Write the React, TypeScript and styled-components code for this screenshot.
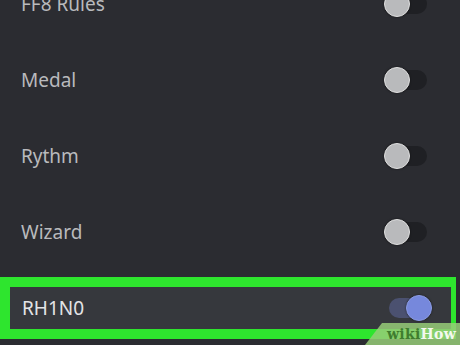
import styled, { createGlobalStyle } from 'styled-components'

const GlobalStyle = createGlobalStyle`
   html, body {
      margin: 0;
      padding: 0;
      background: #2b2c31;
      overflow: hidden;
   }
   body {
      width: 460px;
      height: 345px;
      font-family: 'Noto Sans', 'Open Sans', sans-serif;
   }
`

const Screen = styled.div`
   position: relative;
   width: 460px;
   height: 345px;
   overflow: hidden;
   background: #2b2c31;
`

const List = styled.div`
   display: flex;
   flex-direction: column;
   margin-top: -34px;
`

const Row = styled.div`
   display: flex;
   align-items: center;
   justify-content: space-between;
   height: 76px;
   padding: 0 33px 0 21px;
   color: #b9babd;
   font-size: 19px;
`

const Highlight = styled.div`
   margin: 7px 4px 0 0;
   border: 10px solid #2ee52e;
   border-right-width: 5px;
`

const ActiveRow = styled.div`
   display: flex;
   align-items: center;
   justify-content: space-between;
   height: 42px;
   padding: 0 20px 0 12px;
   background: #36383d;
   color: #e3e4e6;
   font-size: 19px;
`

const Track = styled.div<{ $on?: boolean }>`
   position: relative;
   width: 42px;
   height: 20px;
   border-radius: 10px;
   background: ${p => (p.$on ? '#4b5170' : '#1f2024')};
`

const Knob = styled.div<{ $on?: boolean }>`
   position: absolute;
   top: -3px;
   left: ${p => (p.$on ? '17px' : '-1px')};
   width: 26px;
   height: 26px;
   border-radius: 50%;
   box-sizing: border-box;
   background: ${p => (p.$on ? '#7688dc' : '#b9babc')};
   border: 1px solid ${p => (p.$on ? '#8c9ce4' : '#e0e0e0')};
   box-shadow: 0 0 2px rgba(0, 0, 0, 0.6);
`

const Watermark = styled.div`
   position: absolute;
   right: 0;
   bottom: 0;
   width: 95px;
   height: 22px;
   background: rgba(150, 205, 120, 0.85);
   clip-path: polygon(17px 0, 100% 0, 100% 100%, 0 100%);
   display: flex;
   align-items: center;
   padding-left: 22px;
   box-sizing: border-box;
   font-family: 'DejaVu Serif', serif;
   font-weight: bold;
   font-size: 14px;
   letter-spacing: 0.3px;
`

const Wiki = styled.span`
   color: #3f7d2e;
`

const How = styled.span`
   color: #f4f8ef;
`

const Toggle = ({ on }: { on?: boolean }) => (
   <Track $on={on}>
      <Knob $on={on} />
   </Track>
)

const bots = ['FF8 Rules', 'Medal', 'Rythm', 'Wizard']

const App = () => {
   return (
      <Screen>
         <GlobalStyle />
         <List>
            {bots.map(name => (
               <Row key={name}>
                  {name}
                  <Toggle />
               </Row>
            ))}
            <Highlight>
               <ActiveRow>
                  RH1N0
                  <Toggle on />
               </ActiveRow>
            </Highlight>
         </List>
         <Watermark>
            <Wiki>wiki</Wiki>
            <How>How</How>
         </Watermark>
      </Screen>
   )
}

export default App
